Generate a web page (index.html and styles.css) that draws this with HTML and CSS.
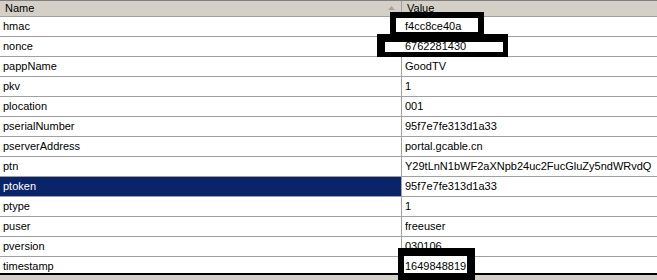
FILE: index.html
```html
<!DOCTYPE html>
<html lang="en">
<head>
    <meta charset="UTF-8">
    <meta name="viewport" content="width=device-width, initial-scale=1.0">
    <title>Parameters</title>
    <link rel="stylesheet" href="styles.css">
</head>
<body>

    <div class="window">
        <div class="list">
            <div class="head">
                <div class="hcell">
                    Name
                    <svg class="sort" width="7" height="4" viewBox="0 0 7 4"><path d="M3.5 0 L7 4 L0 4 Z" fill="#a7a39b"/></svg>
                </div>
                <div class="hcell">Value</div>
            </div>
            <div class="row"><div class="name">hmac</div><div class="value"><span class="kept">f4cc8ce40a</span></div></div>
            <div class="row"><div class="name">nonce</div><div class="value"><span class="kept">6762281430</span></div></div>
            <div class="row"><div class="name">pappName</div><div class="value">GoodTV</div></div>
            <div class="row"><div class="name">pkv</div><div class="value">1</div></div>
            <div class="row"><div class="name">plocation</div><div class="value">001</div></div>
            <div class="row"><div class="name">pserialNumber</div><div class="value">95f7e7fe313d1a33</div></div>
            <div class="row"><div class="name">pserverAddress</div><div class="value">portal.gcable.cn</div></div>
            <div class="row"><div class="name">ptn</div><div class="value">Y29tLnN1bWF2aXNpb24uc2FucGluZy5ndWRvdQ</div></div>
            <div class="row selected"><div class="name">ptoken</div><div class="value">95f7e7fe313d1a33</div></div>
            <div class="row"><div class="name">ptype</div><div class="value">1</div></div>
            <div class="row"><div class="name">puser</div><div class="value">freeuser</div></div>
            <div class="row"><div class="name">pversion</div><div class="value">030106</div></div>
            <div class="row"><div class="name">timestamp</div><div class="value"><span class="kept">1649848819</span></div></div>
        </div>
        <div class="status"></div>

        <!-- hand-drawn frames around the values of interest -->
        <div class="mark mark-hmac"></div>
        <div class="mark mark-nonce"></div>
        <div class="mark mark-time"></div>
    </div>

</body>
</html>
```

FILE: styles.css
```css
* {
    box-sizing: border-box;
}

body {
    margin: 0;
    width: 657px;
    height: 280px;
    overflow: hidden;
    background-color: #d4d0c8;
    font-family: "Liberation Sans", Arial, sans-serif;
    font-size: 11px;
    color: #000;
}

.window {
    position: relative;
    height: 280px;
    overflow: hidden;
}

.list {
    height: 273px;
    overflow: hidden;
    background-color: #fff;
}

.head {
    display: grid;
    grid-template-columns: 402px 1fr;
    height: 17px;
    border-top: 1px solid #808080;
    border-bottom: 1px solid #a0a0a0;
    background-color: #d4d0c8;
    line-height: 15px;
}

.hcell {
    display: flex;
    align-items: center;
    padding-left: 5px;
}

.hcell:first-child {
    border-right: 1px solid #a0a0a0;
}

.sort {
    margin-left: auto;
    margin-right: 6px;
    margin-top: -1px;
}

.row {
    display: grid;
    grid-template-columns: 402px 1fr;
    height: 20px;
    border-bottom: 1px solid #a0a0a0;
    line-height: 19px;
    white-space: nowrap;
}

.name {
    padding-left: 3px;
    border-right: 1px solid #a0a0a0;
}

.value {
    padding-left: 3px;
}

.selected .name {
    background-color: #0a246a;
    color: #fff;
}

.kept {
    position: relative;
    z-index: 2;
}

.status {
    height: 7px;
    border-top: 2px solid #000;
    background-color: #d4d0c8;
}

.mark {
    position: absolute;
    z-index: 1;
    background-color: #fff;
    border: solid #000;
}

.mark-hmac {
    left: 390px;
    top: 12px;
    width: 94px;
    height: 22px;
    border-width: 6px 6px 2px 6px;
}

.mark-nonce {
    left: 377px;
    top: 34px;
    width: 131px;
    height: 23px;
    border-width: 8px 5px 5px 8px;
}

.mark-time {
    left: 398px;
    top: 248px;
    width: 77px;
    height: 40px;
    border-width: 8px 8px 15px 6px;
}
```
